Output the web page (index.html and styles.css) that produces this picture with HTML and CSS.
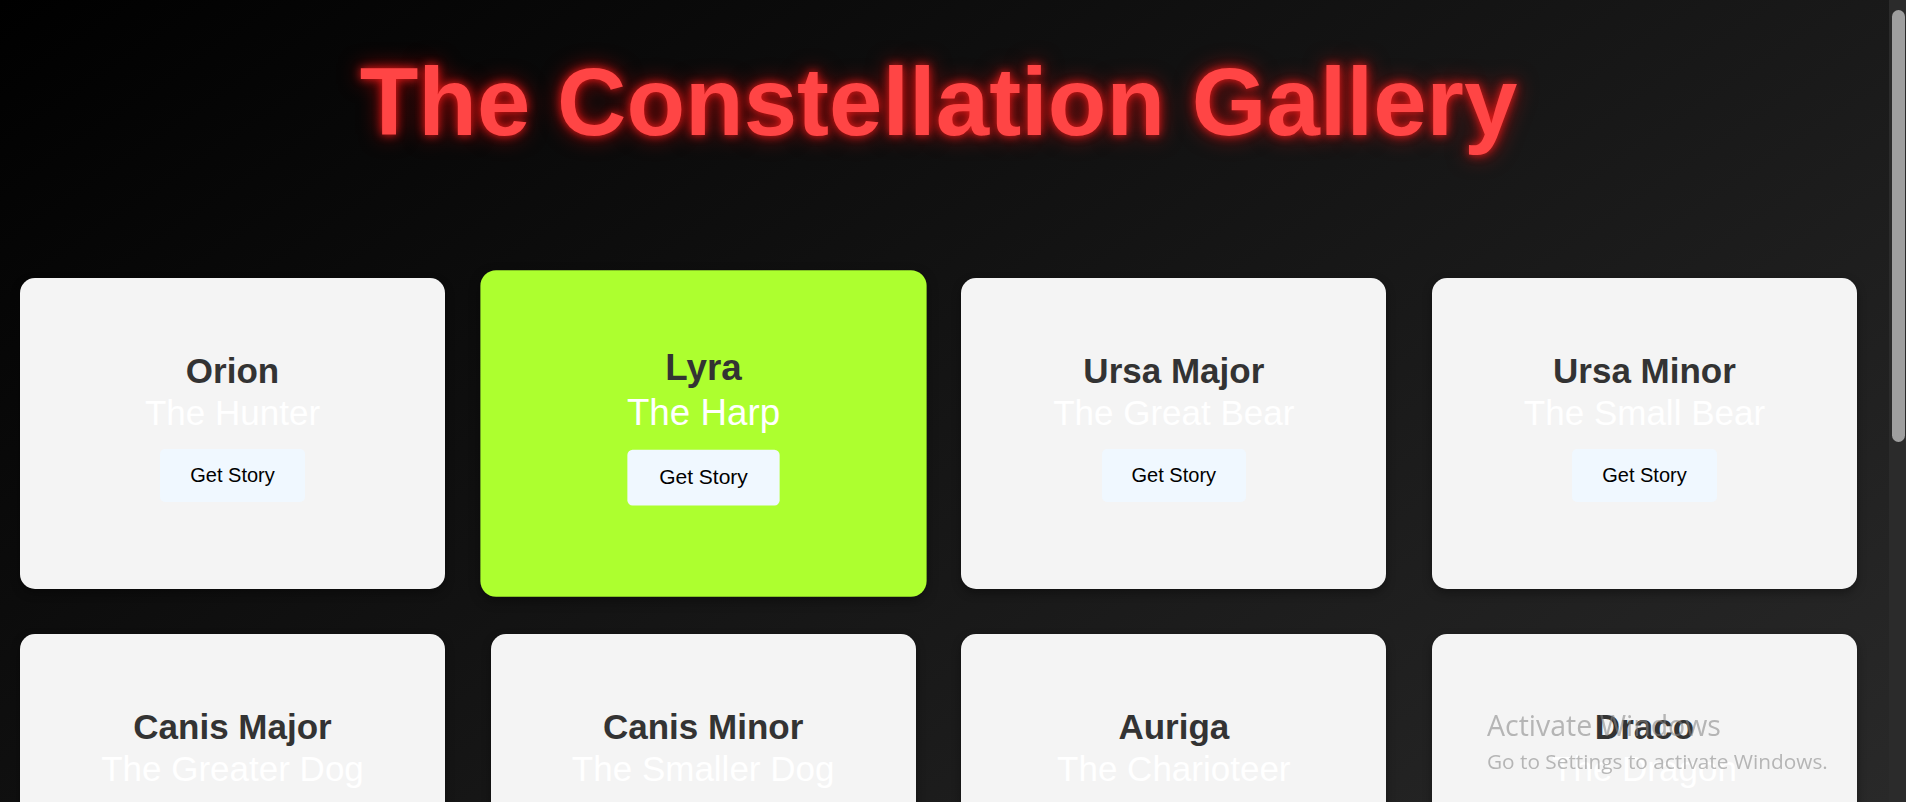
FILE: index.html
```html
<!DOCTYPE html>
<html lang="en">
<head>
<meta charset="utf-8">
<title>The Constellation Gallery</title>
<link rel="stylesheet" href="styles.css">
</head>
<body>
<div class="window">
  <main class="page">
    <h1 class="title">The Constellation Gallery</h1>
    <section class="gallery">
      <article class="card">
        <h2 class="card-name">Orion</h2>
        <p class="card-sub">The Hunter</p>
        <button class="story-btn">Get Story</button>
      </article>
      <article class="card card-active">
        <h2 class="card-name">Lyra</h2>
        <p class="card-sub">The Harp</p>
        <button class="story-btn">Get Story</button>
      </article>
      <article class="card">
        <h2 class="card-name">Ursa Major</h2>
        <p class="card-sub">The Great Bear</p>
        <button class="story-btn">Get Story</button>
      </article>
      <article class="card">
        <h2 class="card-name">Ursa Minor</h2>
        <p class="card-sub">The Small Bear</p>
        <button class="story-btn">Get Story</button>
      </article>
      <article class="card">
        <h2 class="card-name">Canis Major</h2>
        <p class="card-sub">The Greater Dog</p>
        <button class="story-btn">Get Story</button>
      </article>
      <article class="card">
        <h2 class="card-name">Canis Minor</h2>
        <p class="card-sub">The Smaller Dog</p>
        <button class="story-btn">Get Story</button>
      </article>
      <article class="card">
        <h2 class="card-name">Auriga</h2>
        <p class="card-sub">The Charioteer</p>
        <button class="story-btn">Get Story</button>
      </article>
      <article class="card">
        <h2 class="card-name">Draco</h2>
        <p class="card-sub">The Dragon</p>
        <button class="story-btn">Get Story</button>
      </article>
    </section>
  </main>
  <div class="scrollbar"><div class="scroll-thumb"></div></div>
</div>
<div class="activate">
  <div class="activate-title">Activate Windows</div>
  <div class="activate-sub">Go to Settings to activate Windows.</div>
</div>
</body>
</html>
```
FILE: styles.css
```css
html, body {
  margin: 0;
  padding: 0;
  height: 100%;
  overflow: hidden;
}

body {
  font-family: "Liberation Sans", Arial, sans-serif;
  background: linear-gradient(to bottom right, #000000 0%, #333333 100%);
  background-size: 1906px 1300px;
  background-repeat: no-repeat;
  background-color: #2a2a2a;
}

.window {
  display: flex;
  height: 100vh;
}

.page {
  flex: 1;
  overflow: hidden;
  padding: 0 0 0 20px;
}

.title {
  width: 1837px;
  margin: 47px 0 121px;
  text-align: center;
  font-size: 96px;
  font-weight: bold;
  line-height: normal;
  color: #ff4545;
  text-shadow: 0 0 10px rgba(255, 30, 30, 0.9), 0 0 22px rgba(255, 0, 0, 0.6);
}

.gallery {
  width: 1837px;
  display: grid;
  grid-template-columns: repeat(4, 425px);
  justify-content: space-between;
  row-gap: 45px;
}

.card {
  height: 311px;
  box-sizing: border-box;
  background: #f4f4f4;
  border-radius: 15px;
  box-shadow: 0 4px 10px rgba(0, 0, 0, 0.35);
  display: flex;
  flex-direction: column;
  align-items: center;
  justify-content: center;
  text-align: center;
}

.card-active {
  background: #adff2f;
  transform: scale(1.05);
}

.card-name {
  margin: 0;
  font-size: 35px;
  font-weight: bold;
  line-height: 42px;
  color: #333333;
}

.card-sub {
  margin: 0 0 15px;
  font-size: 35px;
  line-height: 42px;
  color: #ffffff;
}

.story-btn {
  margin: 0 0 16px;
  padding: 15px 30px;
  border: none;
  border-radius: 5px;
  background: #f0f8ff;
  color: #000000;
  font-family: "Liberation Sans", Arial, sans-serif;
  font-size: 20px;
  line-height: normal;
}

.scrollbar {
  width: 17px;
  flex: none;
  background: #2b2b2b;
  padding: 10px 1px 0 3px;
  box-sizing: border-box;
}

.scroll-thumb {
  height: 432px;
  background: #9f9f9f;
  border-radius: 7px;
}

.activate {
  position: fixed;
  left: 1487px;
  top: 707px;
  font-family: "Open Sans", "Noto Sans", sans-serif;
  font-weight: 400;
  color: rgba(130, 130, 130, 0.55);
  white-space: nowrap;
}

.activate-title {
  font-size: 28.5px;
  line-height: 37px;
}

.activate-sub {
  font-size: 20.8px;
  line-height: 35px;
}
```
